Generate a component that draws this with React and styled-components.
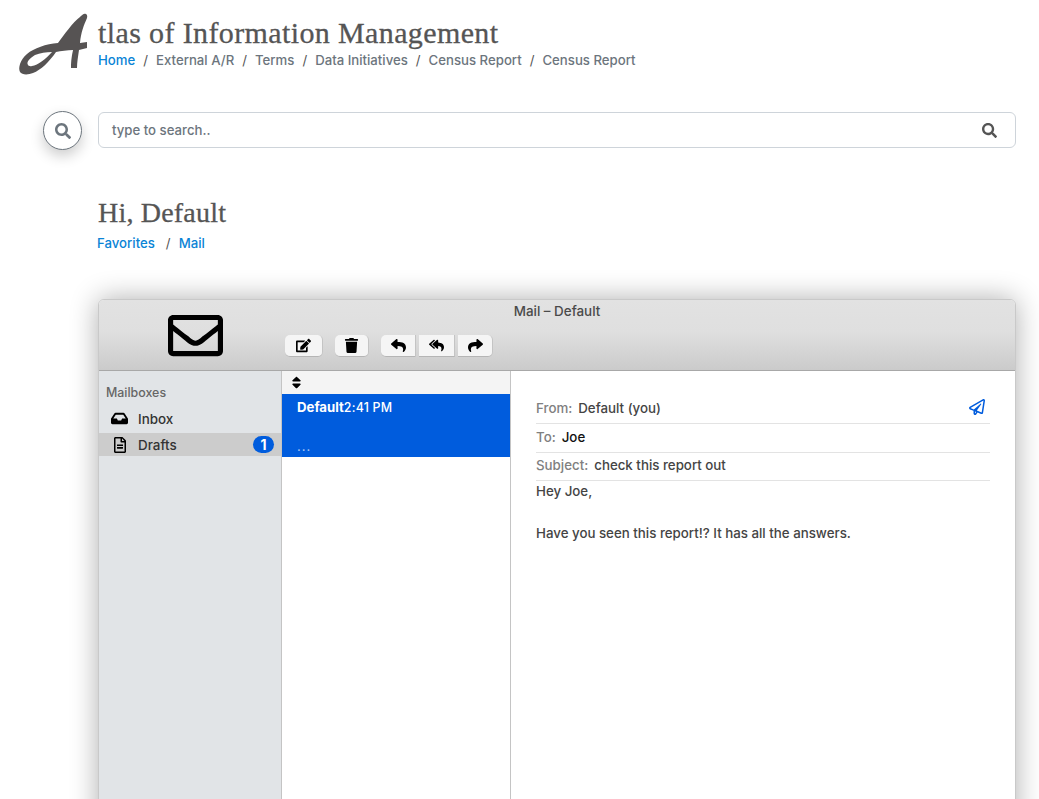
import React from 'react';
import styled, { createGlobalStyle } from 'styled-components';
import {
  FaEdit, FaInbox, FaRegEnvelope, FaRegFileAlt, FaRegPaperPlane, FaReply, FaReplyAll,
  FaSearch, FaShare, FaSort, FaTrash,
} from 'react-icons/fa';

const GlobalStyle = createGlobalStyle`
  html, body {
    margin: 0;
    height: 799px;
    overflow: hidden;
    background: #fff;
    font-family: Inter, "Liberation Sans", sans-serif;
  }
  * { box-sizing: border-box; }
`;

const Header = styled.header`
  display: flex;
  align-items: flex-start;
  padding: 12px 0 0 18px;
  height: 111px;
`;

const Logo = styled.svg`
  width: 72px;
  height: 64px;
  margin-right: 8px;
  flex-shrink: 0;
`;

const Title = styled.h1`
  margin: 0;
  padding-top: 4px;
  font-family: "Liberation Serif", serif;
  font-weight: 400;
  font-size: 30px;
  line-height: 34px;
  letter-spacing: 0.38px;
  color: #555;
  -webkit-text-stroke: 0.3px #555;
`;

const Crumbs = styled.nav`
  display: flex;
  font-size: 13.2px;
  line-height: 17px;
  margin-top: 2px;
  font-weight: 500;
`;

const Crumb = styled.span`
  color: ${p => (p.$active ? '#0a84d6' : '#6c757d')};
`;

const Slash = styled.span`
  color: #555;
  margin: 0 8px;
  font-weight: 400;
`;

const SearchRow = styled.div`
  display: flex;
  align-items: flex-start;
  gap: 16px;
  padding: 0 23px 0 43px;
`;

const RoundButton = styled.button`
  width: 39px;
  height: 39px;
  border-radius: 50%;
  border: 1px solid #6c757d;
  background: #fff;
  color: #6c757d;
  display: flex;
  align-items: center;
  justify-content: center;
  font-size: 16px;
  padding: 0;
  box-shadow: 0 6px 14px rgba(0, 0, 0, 0.2);
`;

const SearchBox = styled.div`
  flex: 1;
  height: 36px;
  margin-top: 1px;
  border: 1px solid #ced4da;
  border-radius: 6px;
  display: flex;
  align-items: center;
  justify-content: space-between;
  padding: 0 18px 0 13px;
  color: #6c757d;
  font-size: 13.2px;
  font-weight: 500;
`;

const Main = styled.main`
  padding: 46px 23px 0 98px;
`;

const Greeting = styled.h2`
  margin: 0;
  font-family: "Liberation Serif", serif;
  font-weight: 400;
  font-size: 28px;
  line-height: 34px;
  letter-spacing: 0.2px;
  color: #555;
  -webkit-text-stroke: 0.3px #555;
`;

const Tabs = styled.nav`
  display: flex;
  margin: 5px 0 0 -1px;
  font-size: 13.2px;
  line-height: 17px;
  font-weight: 500;
  color: #0a84d6;
`;

const TabSlash = styled.span`
  color: #555;
  margin: 0 8px 0 11px;
  font-weight: 400;
`;

const Window = styled.section`
  margin-top: 47px;
  height: 640px;
  border: 1px solid #c9c9c9;
  border-radius: 6px 6px 0 0;
  box-shadow: 0 0 28px rgba(0, 0, 0, 0.32);
  background: #fff;
  overflow: hidden;
`;

const TitleBar = styled.div`
  display: grid;
  grid-template-columns: 183px 1fr;
  height: 71px;
  background: linear-gradient(to bottom, #e2e2e2 0%, #dfdfdf 45%, #cbcbcb 100%);
  border-bottom: 1px solid #a8a8a8;
  position: relative;
`;

const MailIcon = styled.div`
  display: flex;
  align-items: center;
  justify-content: center;
  font-size: 55px;
  color: #000;
  padding: 0 0 0 9px;
`;

const WindowTitle = styled.div`
  position: absolute;
  top: 3px;
  left: 0;
  right: 0;
  text-align: center;
  font-size: 13.4px;
  line-height: 17px;
  color: #4a4a4a;
  font-weight: 500;
`;

const Toolbar = styled.div`
  display: flex;
  align-items: flex-start;
  padding: 35px 0 0 3px;
  gap: 12px;
`;

const Group = styled.div`
  display: flex;
  gap: 3px;
`;

const ToolButton = styled.button`
  width: ${p => p.$w}px;
  height: 22px;
  padding: 0;
  border: none;
  border-bottom: 1px solid #b5b5b5;
  border-right: 1px solid #c4c4c4;
  border-radius: ${p => p.$radius || '5px'};
  background: #f5f5f5;
  color: #000;
  font-size: 15px;
  display: flex;
  align-items: center;
  justify-content: center;
`;

const Panes = styled.div`
  display: grid;
  grid-template-columns: 183px 229px 1fr;
  height: 100%;
`;

const Sidebar = styled.aside`
  background: #e1e4e7;
  border-right: 1px solid #c4c4c4;
  padding-top: 14px;
`;

const SidebarTitle = styled.div`
  padding-left: 7px;
  font-size: 12.4px;
  line-height: 16px;
  font-weight: 500;
  color: #666;
  margin-bottom: 6px;
`;

const Mailbox = styled.div`
  display: flex;
  align-items: center;
  height: 23px;
  margin-bottom: ${p => (p.$selected ? 0 : '3px')};
  padding: 0 7px 0 12px;
  font-size: 13.4px;
  font-weight: 500;
  color: #333;
  background: ${p => (p.$selected ? '#cccccc' : 'transparent')};
`;

const MailboxIcon = styled.span`
  width: 17px;
  display: flex;
  justify-content: center;
  margin-right: 10px;
  font-size: ${p => p.$size}px;
  color: #000;
`;

const MailboxName = styled.span`
  flex: 1;
`;

const Badge = styled.span`
  width: 21px;
  height: 17px;
  border-radius: 9px;
  background: #005cdd;
  color: #fff;
  font-size: 14px;
  font-weight: 700;
  display: flex;
  align-items: center;
  justify-content: center;
`;

const MessageList = styled.div`
  border-right: 1px solid #c4c4c4;
`;

const SortBar = styled.div`
  height: 23px;
  background: #f4f4f4;
  display: flex;
  align-items: center;
  padding-left: 7px;
  font-size: 15px;
  color: #000;
`;

const MessageItem = styled.div`
  height: 63px;
  background: #005cdd;
  color: #fff;
  padding: 5px 0 0 15px;
`;

const MessageHead = styled.div`
  display: flex;
  font-size: 13.2px;
  line-height: 17px;
`;

const Sender = styled.span`
  font-weight: 700;
`;

const Time = styled.span`
  font-size: 12.4px;
  font-weight: 500;
  letter-spacing: 0.2px;
`;

const Preview = styled.div`
  margin-top: 22px;
  font-size: 13px;
  line-height: 17px;
  letter-spacing: 1px;
  color: #a9c6f2;
`;

const Detail = styled.div`
  padding: 20px 25px 0 25px;
`;

const Field = styled.div`
  display: flex;
  align-items: center;
  gap: 6px;
  height: ${p => p.$h}px;
  padding: ${p => p.$pad || '0'};
  border-bottom: 1px solid #e3e3e3;
  font-size: 13.3px;
  font-weight: 500;
  color: ${p => (p.$dark ? '#111' : '#444')};
`;

const FieldLabel = styled.span`
  color: #808080;
`;

const SendIcon = styled.span`
  margin: -3px 5px 0 auto;
  color: #005cdd;
  font-size: 16px;
  display: flex;
`;

const Body = styled.div`
  font-size: 13.3px;
  line-height: 21px;
  font-weight: 500;
  color: #444;
`;

export default function App() {
  return (
    <>
      <GlobalStyle />
      <Header>
        <Logo viewBox="0 0 72 64">
          <path
            fillRule="evenodd"
            d="M66 2 C68 1 70 3 69 6 C66 13 63 20 62 31 L69 30 L69 36 L61 38 C60 45 59 50 59 56 L53 56 C53 48 54 43 55 38 C49 38 43 39 38 40 C31 50 23 58 15 61 C10 63 4 63 2 60 C0 56 2 48 9 42 C16 36 28 32 40 31 C46 23 55 10 62 5 C63 4 65 2 66 2 Z M10 53 C8 50 12 46 17 43 C22 41 28 40 34 40 C28 47 20 53 14 54 C12 54.5 10.5 54 10 53 Z"
            fill="#565353"
          />
        </Logo>
        <div>
          <Title>tlas of Information Management</Title>
          <Crumbs>
            <Crumb $active>Home</Crumb>
            {['External A/R', 'Terms', 'Data Initiatives', 'Census Report', 'Census Report'].map((c, i) => (
              <React.Fragment key={i}>
                <Slash>/</Slash>
                <Crumb>{c}</Crumb>
              </React.Fragment>
            ))}
          </Crumbs>
        </div>
      </Header>
      <SearchRow>
        <RoundButton><FaSearch /></RoundButton>
        <SearchBox>
          type to search..
          <FaSearch size={15} color="#555" />
        </SearchBox>
      </SearchRow>
      <Main>
        <Greeting>Hi, Default</Greeting>
        <Tabs>
          Favorites
          <TabSlash>/</TabSlash>
          Mail
        </Tabs>
        <Window>
          <TitleBar>
            <WindowTitle>Mail – Default</WindowTitle>
            <MailIcon><FaRegEnvelope /></MailIcon>
            <Toolbar>
              <ToolButton $w={38}><FaEdit /></ToolButton>
              <ToolButton $w={34}><FaTrash /></ToolButton>
              <Group>
                <ToolButton $w={35} $radius="5px 0 0 5px"><FaReply /></ToolButton>
                <ToolButton $w={36} $radius="0"><FaReplyAll /></ToolButton>
                <ToolButton $w={35} $radius="0 5px 5px 0"><FaShare /></ToolButton>
              </Group>
            </Toolbar>
          </TitleBar>
          <Panes>
            <Sidebar>
              <SidebarTitle>Mailboxes</SidebarTitle>
              <Mailbox>
                <MailboxIcon $size={17}><FaInbox /></MailboxIcon>
                <MailboxName>Inbox</MailboxName>
              </Mailbox>
              <Mailbox $selected>
                <MailboxIcon $size={16}><FaRegFileAlt /></MailboxIcon>
                <MailboxName>Drafts</MailboxName>
                <Badge>1</Badge>
              </Mailbox>
            </Sidebar>
            <MessageList>
              <SortBar><FaSort /></SortBar>
              <MessageItem>
                <MessageHead>
                  <Sender>Default</Sender>
                  <Time>2:41 PM</Time>
                </MessageHead>
                <Preview>...</Preview>
              </MessageItem>
            </MessageList>
            <Detail>
              <Field $h={33} $pad="2px 0 0">
                <FieldLabel>From:</FieldLabel> Default (you)
                <SendIcon><FaRegPaperPlane /></SendIcon>
              </Field>
              <Field $h={29} $pad="0 0 2px" $dark><FieldLabel>To:</FieldLabel> Joe</Field>
              <Field $h={28} $pad="0 0 4px"><FieldLabel>Subject:</FieldLabel> check this report out</Field>
              <Body>
                Hey Joe,
                <br />
                <br />
                Have you seen this report!? It has all the answers.
              </Body>
            </Detail>
          </Panes>
        </Window>
      </Main>
    </>
  );
}
